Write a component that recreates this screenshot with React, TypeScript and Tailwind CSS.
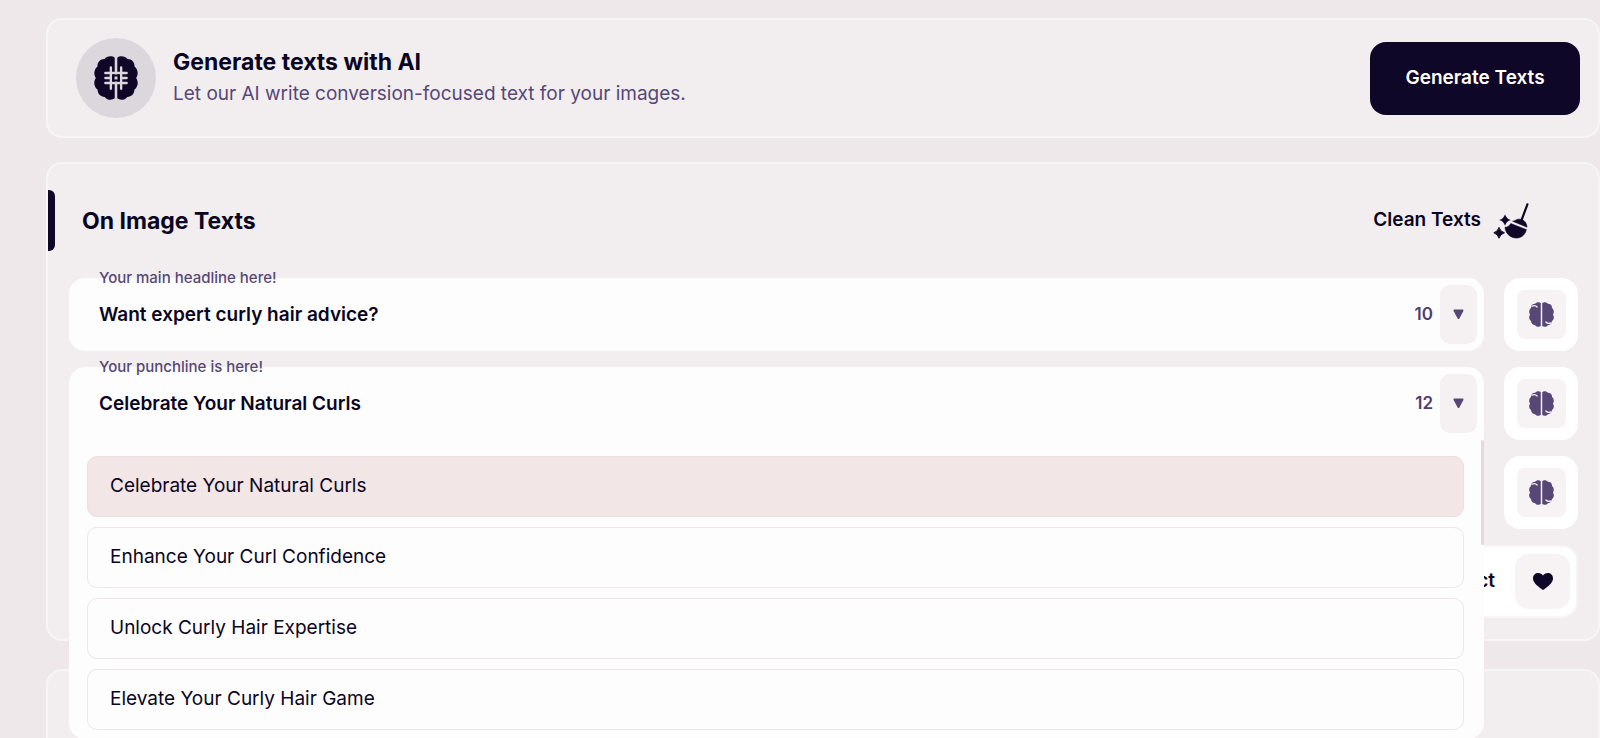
import React, { useState } from 'react';

const suggestions = [
  'Celebrate Your Natural Curls',
  'Enhance Your Curl Confidence',
  'Unlock Curly Hair Expertise',
  'Elevate Your Curly Hair Game',
];

const LEFT_LOBE =
  'M11.3 .9C10-.2 6.9-.2 5.8 1.7C3.7 1.6 1.8 3.2 1.9 5.7C.2 6.9-.5 9.8 1 12C-.5 14.2 .1 17.2 2 18.4C1.9 20.8 3.9 22.4 5.9 22.3C7.1 24.2 10 24.2 11.3 23.1Z';
const RIGHT_LOBE =
  'M12.7 .9C14-.2 17.1-.2 18.2 1.7C20.3 1.6 22.2 3.2 22.1 5.7C23.8 6.9 24.5 9.8 23 12C24.5 14.2 23.9 17.2 22 18.4C22.1 20.8 20.1 22.4 18.1 22.3C16.9 24.2 14 24.2 12.7 23.1Z';

const BrainIcon: React.FC = () => (
  <svg viewBox="0 0 24 24" className="size-[25px] text-[#574776]" aria-hidden="true">
    <path d={LEFT_LOBE} fill="currentColor" />
    <path d={RIGHT_LOBE} fill="currentColor" />
    <path d="M2.8 4C4.8 3.2 6.6 3.4 7.8 4.8" fill="none" stroke="#f7f3f5" strokeWidth="1.2" strokeLinecap="round" />
    <path d="M16.2 19.2C17.4 20.6 19.2 20.8 21.2 20" fill="none" stroke="#f7f3f5" strokeWidth="1.2" strokeLinecap="round" />
  </svg>
);

const BrainChipIcon: React.FC = () => (
  <svg viewBox="0 0 24 24" className="size-11" aria-hidden="true">
    <path d={LEFT_LOBE} fill="#0f0728" />
    <path d={RIGHT_LOBE} fill="#0f0728" />
    <g fill="none" stroke="#dbd7dd" strokeWidth="1.3" strokeLinecap="round">
      <path d="M9.2 6.2V17.8M14.8 6.2V17.8M6.2 9.3H17.8M6.2 14.7H17.8M6.2 12H9.2M14.8 12H17.8" />
    </g>
    <rect x="10.1" y="10.1" width="3.8" height="3.8" fill="#0f0728" />
    <rect x="11.2" y="11.2" width="1.6" height="1.6" fill="#dbd7dd" />
  </svg>
);

const BroomIcon: React.FC = () => (
  <svg viewBox="0 0 36 36" className="size-9" fill="#0f0728" aria-hidden="true">
    <path d="M34.4 1.4L28.6 17" stroke="#0f0728" strokeWidth="2.2" strokeLinecap="round" />
    <path d="M19.6 18.2C21.5 18.4 22.6 16.6 25 16.2C30 15.6 33.8 19 34 24.2Z" stroke="#0f0728" strokeWidth=".6" strokeLinejoin="round" />
    <path d="M12 24.2C14.4 24.4 16.2 23.2 17.8 20.6L33.4 26.6C32 32.4 27.6 35.4 22.6 35C16.6 34.4 12.4 30 12 24.2Z" stroke="#0f0728" strokeWidth=".6" strokeLinejoin="round" />
    <path d="M12 11.2Q13.3 15.7 17.8 17Q13.3 18.3 12 22.8Q10.7 18.3 6.2 17Q10.7 15.7 12 11.2Z" />
    <path d="M6 24.4Q7.2 28.6 11.4 29.8Q7.2 31 6 35.2Q4.8 31 .8 29.8Q4.8 28.6 6 24.4Z" stroke="#0f0728" strokeWidth="1" strokeLinejoin="round" />
  </svg>
);

const AiButton: React.FC<{ label: string }> = ({ label }) => (
  <button
    type="button"
    aria-label={label}
    className="flex h-[73px] w-[74px] shrink-0 items-center justify-center rounded-2xl bg-white"
  >
    <span className="flex size-[49px] items-center justify-center rounded-lg bg-[#f7f3f5]">
      <BrainIcon />
    </span>
  </button>
);

interface TextFieldProps {
  id: string;
  label: string;
  value: string;
  count: number;
  open?: boolean;
  onChange: (value: string) => void;
  children?: React.ReactNode;
}

const TextField: React.FC<TextFieldProps> = ({ id, label, value, count, open, onChange, children }) => (
  <div className="relative flex-1">
    <div className={open ? 'flex h-[73px] items-center rounded-t-2xl bg-[#fdfdfd] pr-[7px]' : 'flex h-[73px] items-center rounded-2xl bg-[#fdfdfd] pr-[7px]'}>
      <label htmlFor={id} className="absolute -top-3 left-[30px] text-[15px] leading-6 font-medium text-[#574776]">
        {label}
      </label>
      <input
        id={id}
        value={value}
        onChange={e => onChange(e.target.value)}
        className="h-full min-w-0 flex-1 bg-transparent pl-[30px] text-[19px] font-semibold text-[#0a0423] outline-none"
      />
      <span className="mr-[7px] text-[17px] font-semibold text-[#4f3d75]">{count}</span>
      <button
        type="button"
        aria-label="Toggle suggestions"
        className="flex h-[59px] w-[37px] items-center justify-center rounded-[10px] bg-[#f5f1f3]"
      >
        <svg viewBox="0 0 11 11" className="size-[11px]" aria-hidden="true">
          <path d="M1.5 1.5H9.5L5.5 9Z" fill="#574776" stroke="#574776" strokeWidth="2" strokeLinejoin="round" />
        </svg>
      </button>
    </div>
    {children}
  </div>
);

const App: React.FC = () => {
  const [headline, setHeadline] = useState('Want expert curly hair advice?');
  const [punchline, setPunchline] = useState(suggestions[0]);

  return (
    <div className="h-screen overflow-hidden bg-[#eee8ea] pt-[18px] pl-[46px] font-['Inter','Liberation_Sans',sans-serif] text-[#0a0423]">
      <section className="flex items-center rounded-2xl border-2 border-[#f7f5f6] bg-[#f2eeef] py-[18px] pr-[18px] pl-7">
        <div className="flex size-20 shrink-0 items-center justify-center rounded-full bg-[#dbd7dd]">
          <BrainChipIcon />
        </div>
        <div className="ml-[17px] flex-1">
          <h2 className="text-[23px] leading-8 font-bold">Generate texts with AI</h2>
          <p className="text-[19px] leading-8 text-[#574776]">Let our AI write conversion-focused text for your images.</p>
        </div>
        <button type="button" className="h-[73px] w-[210px] rounded-2xl bg-[#0f0728] text-[19px] font-semibold text-white">
          Generate Texts
        </button>
      </section>

      <section className="relative mt-6 rounded-2xl border-2 border-[#f7f5f6] bg-[#f2eeef] pt-[26px] pb-[21px]">
        <div className="flex h-[61px] items-center">
          <span className="h-full w-[7px] rounded-r-md bg-[#0f0728]" />
          <h2 className="ml-[27px] flex-1 text-[23px] leading-8 font-bold">On Image Texts</h2>
          <button type="button" className="mr-[69px] flex items-center gap-3 text-[19px] font-semibold">
            Clean Texts
            <BroomIcon />
          </button>
        </div>

        <div className="mt-[27px] flex flex-col gap-4 pr-5 pl-[21px]">
          <div className="flex gap-5">
            <TextField id="headline" label="Your main headline here!" value={headline} count={10} onChange={setHeadline} />
            <AiButton label="Rewrite headline" />
          </div>
          <div className="flex gap-5">
            <TextField id="punchline" label="Your punchline is here!" value={punchline} count={12} open onChange={setPunchline}>
              <div className="absolute inset-x-0 top-[73px] z-10 rounded-b-2xl bg-[#fdfdfd] pt-4 pr-5 pb-[9px] pl-[18px]">
                <ul className="flex flex-col gap-2.5">
                  {suggestions.map(text => (
                    <li key={text}>
                      <button
                        type="button"
                        onClick={() => setPunchline(text)}
                        className={
                          text === punchline
                            ? 'h-[61px] w-full rounded-[10px] border border-[#ecdfe1] bg-[#f2e6e6] px-[22px] text-left text-[19px]'
                            : 'h-[61px] w-full rounded-[10px] border border-[#ece6e9] px-[22px] text-left text-[19px]'
                        }
                      >
                        {text}
                      </button>
                    </li>
                  ))}
                </ul>
                <span className="absolute top-0 right-0 h-[105px] w-[3px] rounded-full bg-[#e6dadd]" />
              </div>
            </TextField>
            <AiButton label="Rewrite punchline" />
          </div>
          <div className="flex gap-5">
            <div className="h-[73px] flex-1 rounded-2xl bg-[#fdfdfd]" />
            <AiButton label="Rewrite call to action" />
          </div>
          <button
            type="button"
            className="flex h-[73px] items-center justify-end gap-5 self-end rounded-2xl border-2 border-[#f7f5f6] bg-white pr-1.5 pl-8 text-[19px] font-semibold"
          >
            Select
            <span className="flex size-[55px] items-center justify-center rounded-[14px] bg-[#f7f3f5]">
              <svg viewBox="0 0 20 17" className="h-[17px] w-5" aria-hidden="true">
                <path d="M10 17C6 14 0 10 0 5.4C0 2 2.4 0 5.2 0C7.3 0 9 1 10 2.5C11 1 12.7 0 14.8 0C17.6 0 20 2 20 5.4C20 10 14 14 10 17Z" fill="#0f0728" />
              </svg>
            </span>
          </button>
        </div>
      </section>

      <section className="mt-7 h-40 rounded-2xl border-2 border-[#f7f5f6] bg-[#f2eeef]" />
    </div>
  );
};

export default App;
